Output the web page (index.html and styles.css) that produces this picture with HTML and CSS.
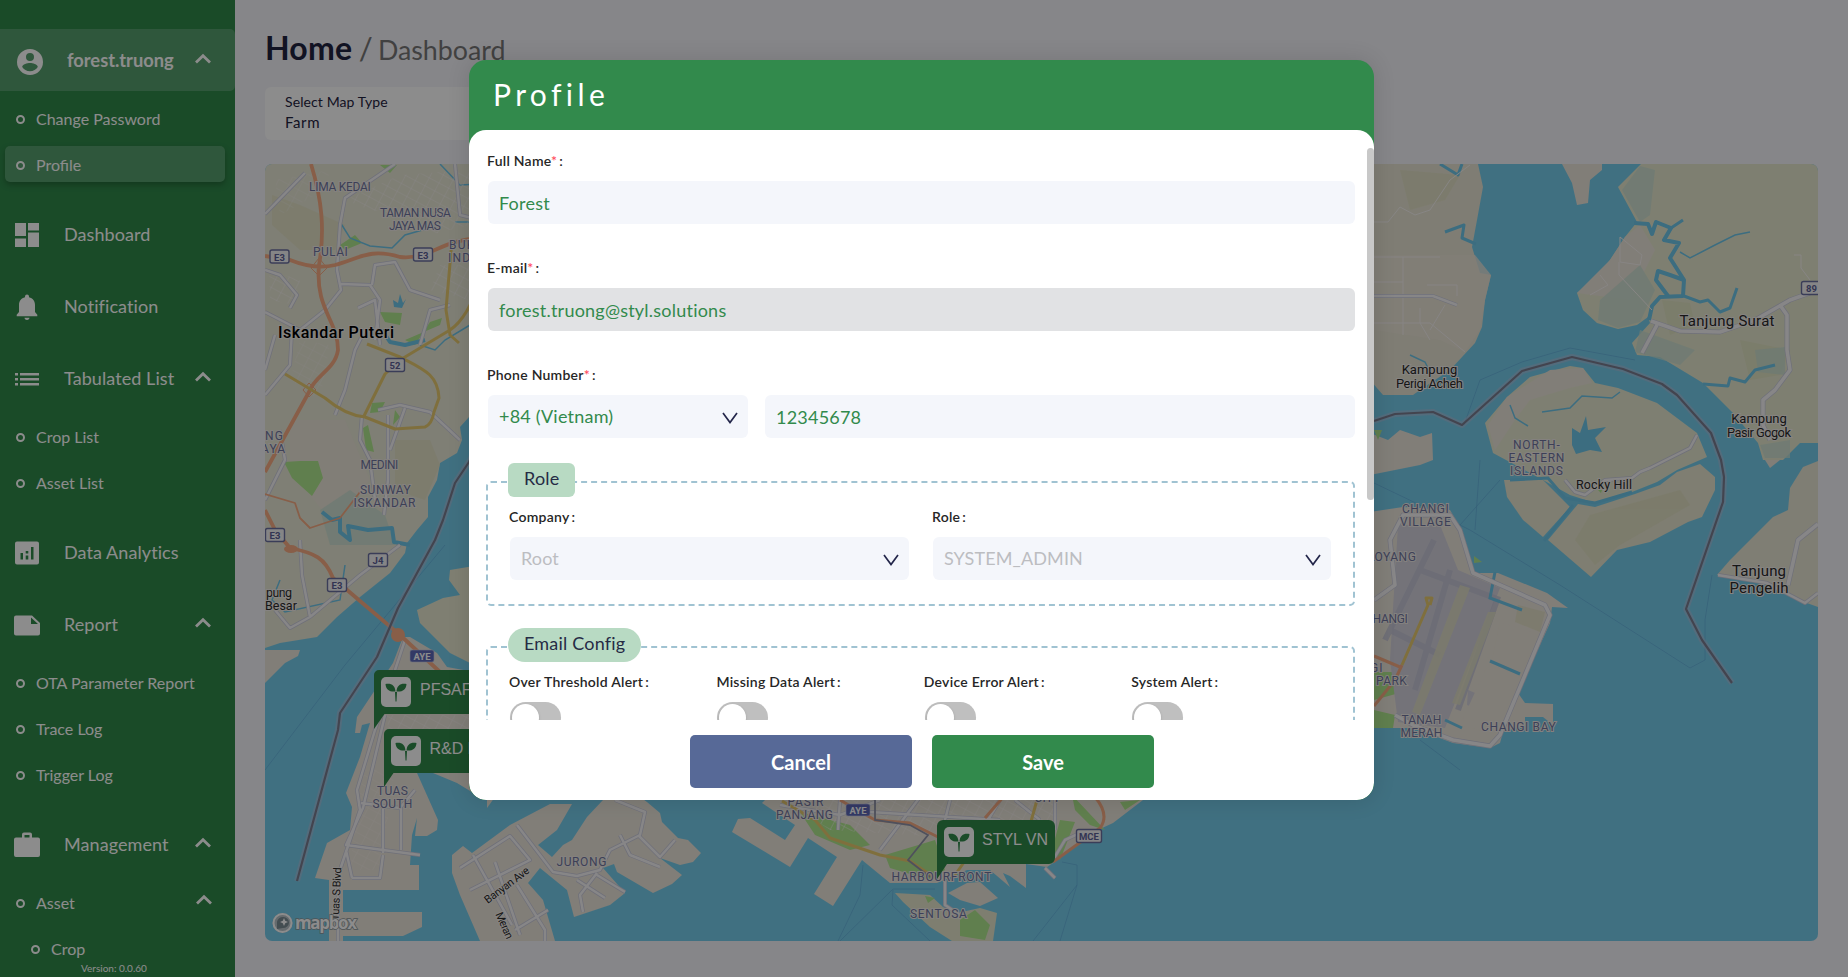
FILE: index.html
```html
<!DOCTYPE html>
<html lang="en">
<head>
<meta charset="utf-8">
<title>Profile</title>
<link rel="stylesheet" href="styles.css">
</head>
<body>
<svg width="0" height="0" class="defs">
  <symbol id="up" viewBox="0 0 18 12"><path d="M2 9.500 9 2.800l7 6.700" fill="none" stroke="#fff" stroke-width="2.800"/></symbol>
  <symbol id="down" viewBox="0 0 16 12"><path d="M1 1l7 9.500 7-9.500" fill="none" stroke="#23264a" stroke-width="1.700"/></symbol>
</svg>
<div class="app">
  <nav class="side">
    <div class="user">
      <svg class="ico" viewBox="0 0 26 26"><path fill-rule="evenodd" fill="#fff" d="M13 0a13 13 0 1 0 0 26 13 13 0 0 0 0-26zm0 4a4 4 0 1 1 0 8 4 4 0 0 1 0-8zm0 18.200c-3.300 0-6.200-1.700-7.800-4.200 0-2.600 5.200-4 7.800-4s7.800 1.400 7.800 4c-1.600 2.500-4.500 4.200-7.800 4.200z"/></svg>
      <b>forest.truong</b><svg class="chev"><use href="#up"/></svg>
    </div>
    <div class="sub">
      <a><i></i>Change Password</a>
      <a class="on"><i></i>Profile</a>
    </div>
    <div class="main"><svg class="ico" viewBox="0 0 26 26"><path fill="#fff" d="M1 1h11v13H1zM14 1h11v7.500H14zM1 16.500h11V25H1zM14 10.500h11V25H14z"/></svg><span>Dashboard</span></div>
    <div class="main"><svg class="ico" viewBox="0 0 26 26"><path fill="#fff" d="M13 26c1.600 0 2.500-1 2.500-2.200h-5c0 1.200.9 2.200 2.500 2.200zM21 18v-7c0-4-2.200-6.700-6-7.700V2.500a2 2 0 0 0-4 0v.8C7.200 4.300 5 7 5 11v7l-2.300 2.700v1.500h20.600v-1.500z"/></svg><span>Notification</span></div>
    <div class="main"><svg class="ico" viewBox="0 0 26 26"><path fill="#fff" d="M1 7h3v2.500H1zM6 7h19v2.500H6zM1 12h3v2.500H1zM6 12h19v2.500H6zM1 17h3v2.500H1zM6 17h19v2.500H6z"/></svg><span>Tabulated List</span><svg class="chev"><use href="#up"/></svg></div>
    <div class="sub">
      <a><i></i>Crop List</a>
      <a><i></i>Asset List</a>
    </div>
    <div class="main"><svg class="ico" viewBox="0 0 26 26"><path fill-rule="evenodd" fill="#fff" d="M3 1.500h20a2 2 0 0 1 2 2v19a2 2 0 0 1-2 2H3a2 2 0 0 1-2-2v-19a2 2 0 0 1 2-2zM6.500 13v6.500H9V13zM11.700 15.500v4h2.600v-4zM11.700 11v2.500h2.600V11zM17 7v12.500h2.500V7z"/></svg><span>Data Analytics</span></div>
    <div class="main"><svg class="ico" viewBox="0 0 26 26"><path fill-rule="evenodd" fill="#fff" d="M2 3.500h16l8 7.500v10.500a2 2 0 0 1-2 2H2a2 2 0 0 1-2-2v-16a2 2 0 0 1 2-2zM17 5.500V12h7z"/></svg><span>Report</span><svg class="chev"><use href="#up"/></svg></div>
    <div class="sub">
      <a><i></i>OTA Parameter Report</a>
      <a><i></i>Trace Log</a>
      <a><i></i>Trigger Log</a>
    </div>
    <div class="main"><svg class="ico" viewBox="0 0 26 26"><path fill-rule="evenodd" fill="#fff" d="M10 .5h6a2 2 0 0 1 2 2v3h6a2 2 0 0 1 2 2V23a2 2 0 0 1-2 2H2a2 2 0 0 1-2-2V7.500a2 2 0 0 1 2-2h6v-3a2 2 0 0 1 2-2zm.5 2.500v2.500h5V3z"/></svg><span>Management</span><svg class="chev"><use href="#up"/></svg></div>
    <div class="sub">
      <a><i></i>Asset<svg class="chev"><use href="#up"/></svg></a>
      <a class="deep"><i></i>Crop</a>
    </div>
    <div class="version">Version: 0.0.60</div>
  </nav>
  <main class="content">
    <h1><b>Home</b><span> / </span><em>Dashboard</em></h1>
    <div class="maptype"><label>Select Map Type</label><div>Farm</div></div>
    <svg class="map" viewBox="265 164 1553 777">
      <defs>
        <pattern id="grid" width="11" height="9" patternUnits="userSpaceOnUse" patternTransform="rotate(28)"><path d="M0 0H11M0 0V9" stroke="#f7f5f3" stroke-width=".9" fill="none"/></pattern>
        <g id="leaf"><rect width="30" height="30" rx="5" fill="#fff"/><path fill="#308a4b" d="M4.500 7c6-1 9.500 1.500 10 7.500-6 .5-9.500-1.500-10-7.500zM25.500 7c-6-1-9.500 1.500-10 7.500 6 .5 9.500-1.500 10-7.500zM14 15h2l-.5 9.500h-1z"/></g>
      </defs>
      <rect x="265" y="164" width="1553" height="777" fill="#76cdec"/>
      <!-- mainland and islands -->
      <g fill="#ece5da">
        <path fill="#e8e7d5" d="M265 164H620V400H469L469 417 460 427 462 440 457 453 440 463 437 480 428 497 428 517 417 530 407 543 405 553 390 573 360 597 337 617 317 637 280 643 265 648z"/>
        <path d="M265 650H300L298 656 285 663 265 683z"/>
        <path fill="#e7e8d0" d="M480 565 450 570 449 580 460 595 443 598 417 610 420 623 437 640 450 653 480 668z"/>
        <path d="M403 637 410 637 437 653 447 667 480 673V797L457 783 433 773 417 773 438 820 437 830 427 836 415 836 417 818 412 835 410 865H419V890H343V912H422V927L403 936H343V941H329V880L315 878 327 843 350 830 352 807 346 793 360 757 370 723 362 725 360 733 355 733 357 717 375 690 393 663z"/>
        <path d="M452 855 463 846 472 853 510 825 550 804H572L557 830 538 845 552 857 563 845 572 840 587 817 603 800 630 790 647 802 660 813 662 822 678 838 688 840 701 853 693 862 680 865 660 858 682 875 672 884 653 893 617 872 614 864 603 868 625 893 610 905 574 917 567 890 540 868 528 883 543 900 555 941H480L460 895 452 873z"/>
        <path d="M487 790H500L487 808z"/>
        <path d="M732 832 738 819 750 818 785 840 795 825 762 803 775 790H1160L1143 800 1113 823 1087 835 1053 863 1047 867 1026 864V888L1010 876 1003 873 1010 887 990 870 967 870 937 883 890 883 862 860 833 906 814 894 837 857 808 838 790 867z"/>
        <path fill="#e6e6cc" d="M895 893 930 895 943 907 957 913 980 908 997 913 993 941H952L930 927 903 902z"/>
        <path d="M948 893 967 883 980 882 998 898 980 906 960 900z"/>
        <path fill="#e7e4d3" d="M1370 164H1478L1483 187 1477 220 1472 247 1480 273 1491 275 1485 300 1482 327 1475 343 1450 370 1420 390 1413 395 1383 395 1370 380z"/>
        <path d="M1562 164 1572 183 1577 205 1588 203 1590 180 1602 170V164z"/>
        <path fill="#e6e8ce" d="M1641 164 1618 187 1637 222 1625 237 1610 260 1600 273 1577 293 1583 310 1597 323 1618 329 1637 325 1648 317 1650 323 1632 343 1637 355 1660 357 1703 383 1733 413 1758 443 1763 460H1783L1800 443H1818V164z"/>
        <path fill="#e6e8d0" d="M1530 377 1570 366 1583 368 1595 383 1618 388 1657 403 1697 433 1707 457 1677 470 1657 482 1632 492 1595 503 1570 495 1543 480 1493 453 1485 423 1507 397z"/>
        <path fill="#e7e5cf" d="M1504 480H1543L1570 507 1543 537 1523 520 1507 497z"/>
        <path fill="#e7e5cf" d="M1548 540 1578 504 1595 507 1635 494 1660 485 1677 472 1700 464 1715 477V490L1702 517 1688 522 1650 542 1617 550 1591 577z"/>
        <path d="M1370 512 1383 510 1403 507 1450 510 1460 527 1473 573 1498 573 1547 593 1568 608 1552 607 1550 623 1518 693 1525 703 1553 704V725L1543 717H1525V725L1503 732 1500 743 1490 748 1453 743 1413 728H1370z"/>
        <path fill="#e7e5d3" d="M1818 461 1803 467 1790 488 1788 510 1773 517 1737 553 1730 560 1717 575 1767 582 1790 597 1818 607z"/>
        <path d="M1370 433 1388 440 1400 430 1420 437 1432 433 1433 460 1420 465 1370 475z"/>
        <path d="M1765 460H1780L1770 468z"/>
      </g>
      <g fill="#ece5da">
        <path d="M1374 255H1475L1491 275 1485 300 1480 330 1465 352 1440 340 1374 330z" opacity=".8"/>
        <path d="M1625 237 1640 225 1655 250 1630 300 1577 293 1610 260zM1488 425 1507 397 1550 370 1583 368 1592 383 1570 388 1530 400 1515 420 1495 450z"/>
        <path d="M290 420H345L370 480 330 520 290 470z" opacity=".8"/>
      </g>
      <g fill="#dfe0be" opacity=".6">
        <path d="M272 195 300 205 345 225 335 250 300 250 272 225zM395 440 430 440 440 465 425 500 395 490z"/>
        <path d="M1662 300 1690 303 1695 325 1670 335zM1740 340 1790 350 1780 375 1750 380zM1400 170 1460 175 1445 200 1410 210z"/>
        <path d="M1575 540 1590 515 1680 490 1690 505 1620 545 1595 565z"/>
      </g>
      <g fill="#c7dfd2" opacity=".75"><path d="M1640 166 1655 170 1650 215 1640 222 1622 190zM1600 300 1640 265 1655 290 1640 322 1618 328 1598 320zM1640 330 1695 350 1680 365 1635 352zM320 510 350 490 385 515 395 545 330 545zM1755 350 1785 347 1785 375 1758 372zM1760 445 1790 440 1790 458 1765 458z"/></g>
      <!-- parks -->
      <g fill="#afe88e">
        <path d="M284 462 300 461 318 461 323 478 312 496 292 478zM340 245 355 235 362 243 345 250zM380 312 402 313 400 325 385 322zM405 340 440 325 442 318 430 322 415 345zM363 428 366 450 374 452 368 425zM372 403 385 402 380 412 370 413zM395 410 400 417 393 425zM380 165 397 165 390 173z"/>
        <path d="M800 812 850 825 870 845 850 850 815 835zM885 855 935 840 945 870 930 880 890 868zM1060 820 1075 822 1060 860 1052 850zM1072 795 1105 830 1090 825 1075 810zM960 920 975 910 990 925 985 940 960 936zM925 896 935 898 928 903zM1120 802 1140 800 1125 810z"/>
        <path d="M1374 672 1410 672 1410 690 1374 700zM1374 710 1395 715 1393 728 1374 728zM1408 527 1420 530 1412 541zM1374 430 1382 430 1378 440zM1598 490 1602 490 1601 493zM1474 556 1482 562 1474 563z"/>
      </g>
      <!-- airport apron and runways -->
      <g fill="#d3d2dd"><path d="M1398 525 1440 525 1458 570 1500 588 1445 728 1398 722 1390 660z"/><path d="M1468 690 1497 702 1490 715 1467 705z"/></g>
      <g stroke="#c3c4d6" stroke-width="6" fill="none" opacity=".8"><path d="M1434 540 1385 640M1450 570 1415 690M1497 600 1458 710M1420 570 1500 600M1390 630 1440 655"/></g>
      <g fill="#e1e0c4" opacity=".8"><path d="M1460 585 1470 588 1420 715 1412 712zM1488 612 1496 612 1460 705 1452 703zM1518 605 1545 612 1540 632 1515 622z"/></g>
      <g fill="#ece5da"><path d="M1500 622 1540 635 1522 672 1492 660zM1488 664 1520 676 1498 735 1460 725z"/></g>
      <!-- small water -->
      <g fill="none" stroke="#6ec6ea">
        <path stroke-width="4" stroke-linejoin="round" d="M1634 223 1648 224 1652 234 1656 222 1671 228 1664 240 1679 243 1670 258 1684 280 1683 296 1660 297 1652 306 1649 320M1668 296 1656 280 1658 271 1670 275 1684 280"/>
        <path stroke-width="3" stroke-linejoin="round" d="M1684 296 1700 302 1708 300 1720 312 1730 308 1737 288M1671 228 1683 220M1703 384 1728 386 1730 378 1745 382 1755 370 1775 365M1440 164 1458 175 1462 164M1476 244 1462 238 1464 225 1445 232"/>
        <path stroke-width="4" stroke-linejoin="round" d="M322 512 332 520 340 518 340 532 350 540 348 526 368 530 392 528 394 542 410 545M382 330 390 342 405 345 425 340"/>
        <path stroke-width="1.500" d="M340 222 350 238 370 246 392 248 405 235 440 225M455 222H480M420 345 435 350 445 340 470 325M440 164 460 185 480 184M280 580 272 600 285 612 340 600 345 565M1510 405 1515 418 1528 426M1542 412 1570 408 1582 396 1612 398 1620 392M1680 252 1690 258 1715 245 1735 235 1750 232M1410 355 1425 362 1430 372"/>
        <path stroke-width="3" d="M1510 480 1548 478 1565 498 1595 503 1632 492M1544 541 1573 505M1495 572 1490 598 1522 610M1490 661 1520 674M1445 720 1462 728"/>
      </g>
      <path fill="#6ec6ea" d="M1572 428 1580 433 1586 416 1588 430 1606 427 1595 438 1602 452 1590 450 1576 454 1572 445zM393 300 398 303 400 294 403 303 406 299 402 308 394 307z"/>
      <g fill="none" stroke="#5faad9" stroke-width="1" opacity=".6">
        <path d="M265 770 345 665 445 545M838 941 860 895 863 865M840 941 893 889 935 889M930 941 892 905 893 890M1033 941 1077 885 1077 865 1062 862M1060 941 1077 885M1374 483 1420 505 1470 530 1560 585 1690 668 1705 660 1705 620 1712 575M1464 425 1480 380 1522 362 1570 348 1635 360M1480 460 1475 530M1420 740 1460 770M1500 480 1460 525"/>
      </g>
      <!-- street texture -->
      <g fill="url(#grid)">
        <path d="M345 200 400 175 469 170V225L430 235 410 215 370 210zM440 265H469V300L430 290zM269 270 300 280 295 305 270 300zM385 715 469 715V760L400 770zM780 797 1060 797 1050 830 990 840 830 830z"/>
        <path opacity=".6" d="M275 180 330 170 325 190 280 215zM300 340 330 345 320 400 290 380zM360 770 395 770 380 870 350 870z"/>
      </g>
      <!-- country lanes -->
      <path fill="none" stroke="#f6f2f0" stroke-width="1" d="M1374 257H1440M1403 257V335M1374 282H1403M1374 323H1430L1465 352M1420 308V323L1430 340M1427 285H1457V296M1445 305 1430 330M1374 222H1388L1400 207 1415 215 1430 210 1450 180 1470 165M1620 237 1642 255 1640 265 1620 262zM1619 262V275L1652 310M1600 275 1608 285 1590 295M1794 255 1801 255V268L1810 280"/>
      <!-- minor roads -->
      <g fill="none" stroke="#c9cbdc" stroke-width="4" stroke-linejoin="round">
        <path d="M265 214 305 173M395 164 345 198 340 225 337 270 341 290 325 310 300 330 265 312M265 270 280 275 297 295 290 308M341 284 370 285 380 300 375 340M358 308 375 300 380 345M372 285 375 265 395 262 410 290 440 300M335 415 345 390 355 350 365 330M362 415 360 440 370 460 375 500M378 410 400 405 430 412 460 440M388 415 388 480 384 515M405 408 390 450M420 345 430 310 450 305M455 164 460 215 480 220M265 395 290 365 292 330M265 370 275 335M300 540 302 575 310 617M265 500 285 460 280 430M310 617 290 628 275 610M310 617 360 575 400 545"/>
        <path d="M405 640 375 730 357 790 360 810 340 870M385 715 363 808 346 845 420 855M383 808V853M401 808V850M352 878H380L383 855M346 850 352 878M338 870V941M361 803 400 808 415 790"/>
        <path d="M517 825 553 872 577 876 600 870 610 850 640 835 645 812 615 800M460 868 510 836 530 860 470 890M473 855 512 925M495 862 520 935M515 930 548 910M517 885 545 930 545 941M620 835 630 855 660 867M638 835 660 857 675 840M597 875 625 892M577 880 605 898M597 873 580 895 583 912"/>
        <path d="M1374 296H1433L1457 305"/>
        <path stroke-width="5" d="M1374 600 1395 585 1390 540 1403 515 1450 515 1460 530 1473 573 1545 605 1550 615 1500 735 1490 746 1453 740 1413 725 1395 715M1818 524 1798 540 1788 585"/>
        <path stroke-width="5" d="M1651 321 1680 331 1720 332 1755 320 1790 300 1818 290M1780 305 1787 315 1787 350 1790 370 1775 390 1763 400 1763 425 1770 440M1657 325 1642 353"/>
        <path d="M1718 575 1767 583 1805 603 1818 593M1565 480 1575 492 1585 495 1605 480 1632 478 1640 472 1650 468 1690 448 1697 435"/>
        <path d="M780 805 840 815 880 800M880 850 920 797M870 812 1000 820M1000 800 970 850M1015 800 1040 820M950 800 940 840M945 880V905L960 915M1053 860 1065 840 1080 833M1045 868 1055 878M1055 797V830M840 800 838 830"/>
      </g>
      <g fill="none" stroke="#f6f4f6" stroke-width="2.500" stroke-linejoin="round">
        <path d="M265 214 305 173M395 164 345 198 340 225 337 270 341 290 325 310 300 330 265 312M265 270 280 275 297 295 290 308M341 284 370 285 380 300 375 340M358 308 375 300 380 345M372 285 375 265 395 262 410 290 440 300M335 415 345 390 355 350 365 330M362 415 360 440 370 460 375 500M378 410 400 405 430 412 460 440M388 415 388 480 384 515M405 408 390 450M420 345 430 310 450 305M455 164 460 215 480 220M265 395 290 365 292 330M265 370 275 335M300 540 302 575 310 617M265 500 285 460 280 430M310 617 290 628 275 610M310 617 360 575 400 545"/>
        <path d="M405 640 375 730 357 790 360 810 340 870M385 715 363 808 346 845 420 855M383 808V853M401 808V850M352 878H380L383 855M346 850 352 878M338 870V941M361 803 400 808 415 790"/>
        <path d="M517 825 553 872 577 876 600 870 610 850 640 835 645 812 615 800M460 868 510 836 530 860 470 890M473 855 512 925M495 862 520 935M515 930 548 910M517 885 545 930 545 941M620 835 630 855 660 867M638 835 660 857 675 840M597 875 625 892M577 880 605 898M597 873 580 895 583 912"/>
        <path d="M1374 296H1433L1457 305"/>
        <path stroke-width="3.600" d="M1374 600 1395 585 1390 540 1403 515 1450 515 1460 530 1473 573 1545 605 1550 615 1500 735 1490 746 1453 740 1413 725 1395 715M1818 524 1798 540 1788 585"/>
        <path stroke-width="3.600" d="M1651 321 1680 331 1720 332 1755 320 1790 300 1818 290M1780 305 1787 315 1787 350 1790 370 1775 390 1763 400 1763 425 1770 440M1657 325 1642 353"/>
        <path d="M1718 575 1767 583 1805 603 1818 593M1565 480 1575 492 1585 495 1605 480 1632 478 1640 472 1650 468 1690 448 1697 435"/>
        <path d="M780 805 840 815 880 800M880 850 920 797M870 812 1000 820M1000 800 970 850M1015 800 1040 820M950 800 940 840M945 880V905L960 915M1053 860 1065 840 1080 833M1045 868 1055 878M1055 797V830M840 800 838 830"/>
      </g>
      <!-- highways -->
      <g fill="none" stroke="#f7ac83" stroke-width="3.800" stroke-linejoin="round">
        <path d="M311 164C322 200 325 230 319 265 315 310 338 320 338 350 335 370 315 375 309 392L265 472M265 256 290 260Q315 270 335 265C360 258 370 248 400 257 430 260 440 240 480 238"/>
        <path d="M265 510 275 530 290 548C315 553 325 558 333 578L400 635 440 672"/>
        <path stroke-width="1.800" d="M265 494 295 503 300 518 310 528 340 518 360 492"/>
        <path stroke-width="3" d="M840 800 875 820 910 823 940 838M985 818 1005 795M1095 797Q1110 815 1100 828L1053 862M1374 656 1400 667M1374 706 1395 680 1402 665"/>
      </g>
      <g fill="#f7ac83"><ellipse cx="291" cy="549" rx="7" ry="4"/><circle cx="398" cy="635" r="7"/></g>
      <path d="M311 268 319 258 327 268 319 276zM303 390 309 383 316 390 309 397z" fill="none" stroke="#f7ac83"/>
      <g fill="none" stroke="#e8cb70" stroke-width="3" stroke-linejoin="round">
        <path d="M285 374 325 398Q345 415 365 417L395 429 425 427Q432 424 434 412L439 398C438 375 425 370 400 357L367 344M364 416 385 374 400 360 450 330Q468 318 480 280M452 240 446 310 450 335 459 343"/>
        <path d="M782 801 815 820 830 838 880 855 910 861 935 878M955 875 967 858M1037 800 1030 825"/>
        <path d="M1402 665 1428 605 1426 598 1432 598 1430 605"/>
      </g>
      <path d="M875 800V820L910 825 928 835 908 860 930 877" fill="none" stroke="#9093a8" stroke-width="1.800"/>
      <!-- territorial border -->
      <g fill="none" stroke-linejoin="round">
        <path stroke="#c2bcd6" stroke-width="6" opacity=".45" d="M480 440 469 462 455 483 443 520 435 540 398 608 377 657 340 713 338 730 297 881M1374 421 1395 414 1433 412 1462 425 1522 371 1572 357 1623 369 1662 384 1677 395 1711 433 1721 460 1724 477 1723 502 1686 609 1702 640 1732 683"/>
        <path stroke="#7a7d90" stroke-width="2.200" d="M480 440 469 462 455 483 443 520 435 540 398 608 377 657 340 713 338 730 297 881M1374 421 1395 414 1433 412 1462 425 1522 371 1572 357 1623 369 1662 384 1677 395 1711 433 1721 460 1724 477 1723 502 1686 609 1702 640 1732 683"/>
      </g>
      <!-- area labels -->
      <g class="area">
        <text x="340.500" y="191" textLength="63">LIMA KEDAI</text>
        <text x="416" y="217" textLength="72">TAMAN NUSA</text><text x="415.500" y="230" textLength="53">JAYA MAS</text>
        <text x="331" y="256" textLength="36">PULAI</text>
        <text x="449" y="249" class="s">BUKIT</text><text x="448" y="262" class="s">INDAH</text>
        <text x="265" y="440" class="s">NG</text><text x="261" y="453" class="s">AYA</text>
        <text x="380" y="469" textLength="39">MEDINI</text>
        <text x="386" y="494" textLength="52">SUNWAY</text><text x="385" y="507" textLength="63">ISKANDAR</text>
        <text x="393" y="795" textLength="32">TUAS</text><text x="393" y="808" textLength="41">SOUTH</text>
        <text x="582" y="866" textLength="51">JURONG</text>
        <text x="806" y="806" textLength="37">PASIR</text><text x="805" y="819" textLength="58">PANJANG</text>
        <text x="1048" y="802" textLength="27">CITY</text>
        <text x="942" y="881" textLength="101">HARBOURFRONT</text><text x="939" y="918" textLength="58">SENTOSA</text>
        <text x="1537" y="449" textLength="48">NORTH-</text><text x="1537" y="462" textLength="57">EASTERN</text><text x="1537" y="475" textLength="54">ISLANDS</text>
        <text x="1426" y="513" textLength="48">CHANGI</text><text x="1426" y="526" textLength="52">VILLAGE</text>
        <text x="1368" y="561" class="s" textLength="49">LOYANG</text><text x="1365" y="623" class="s" textLength="44">CHANGI</text>
        <text x="1370" y="672" class="s">GI</text><text x="1376" y="685" class="s" textLength="32">PARK</text>
        <text x="1422" y="724" textLength="41">TANAH</text><text x="1422" y="737" textLength="43">MERAH</text>
        <text x="1519" y="731" textLength="76">CHANGI BAY</text>
      </g>
      <!-- town labels -->
      <g class="town">
        <text x="336" y="338" class="big" textLength="116">Iskandar Puteri</text>
        <text x="266" y="597" class="m s" textLength="26">pung</text><text x="265" y="610" class="m s">Besar</text>
        <text x="1429.500" y="374">Kampung</text><text x="1429.500" y="388" textLength="67">Perigi Acheh</text>
        <text x="1727" y="326" class="med" textLength="95">Tanjung Surat</text>
        <text x="1759" y="423">Kampung</text><text x="1759" y="437" textLength="64">Pasir Gogok</text>
        <text x="1604" y="489" textLength="56" class="m">Rocky Hill</text>
        <text x="1759" y="576" class="med" textLength="54">Tanjung</text><text x="1759" y="593" class="med" textLength="59">Pengelih</text>
        <text transform="translate(509 888) rotate(-37)" class="st" textLength="53">Banyan Ave</text>
        <text transform="translate(501 927) rotate(66)" class="st" textLength="28">Meran</text>
        <text transform="translate(340 894) rotate(-87)" class="st" textLength="53">Tuas S Blvd</text>
      </g>
      <!-- road shields -->
      <g class="shield">
        <rect x="270" y="250" width="19" height="13" rx="2"/><text x="279.500" y="260.500">E3</text>
        <rect x="413.500" y="248" width="19" height="13" rx="2"/><text x="423" y="258.500">E3</text>
        <rect x="385.500" y="358.500" width="19" height="13" rx="2"/><text x="395" y="369">52</text>
        <rect x="265.500" y="528.500" width="19" height="13" rx="2"/><text x="275" y="539">E3</text>
        <rect x="368.500" y="553.500" width="19" height="13" rx="2"/><text x="378" y="564">J4</text>
        <rect x="327.500" y="578.500" width="19" height="13" rx="2"/><text x="337" y="589">E3</text>
        <rect x="1801.500" y="281.500" width="19" height="13" rx="2"/><text x="1811.500" y="292">89</text>
        <rect x="1076.500" y="829.500" width="25" height="13" rx="2"/><text x="1089" y="840">MCE</text>
      </g>
      <g class="shield blue">
        <rect x="410" y="650" width="24" height="12" rx="2"/><text x="422" y="660">AYE</text>
        <rect x="846" y="804" width="24" height="12" rx="2"/><text x="858" y="814">AYE</text>
      </g>
      <!-- farm pins -->
      <g class="pin">
        <path d="M379 670H520V714H384.500L374 729V675a5 5 0 0 1 5-5z"/><use href="#leaf" x="381" y="677"/><text x="420" y="695">PFSAFARM</text>
        <path d="M389 729H530V773H393.500L384 787V734a5 5 0 0 1 5-5z"/><use href="#leaf" x="391" y="736"/><text x="429.500" y="754">R&amp;D Farm</text>
        <path d="M943 820H1049a6 6 0 0 1 6 6V858a6 6 0 0 1-6 6H947L937 879V826a6 6 0 0 1 6-6z"/><use href="#leaf" x="944" y="827"/><text x="982" y="845">STYL VN</text>
      </g>
      <g class="mapbox">
        <circle cx="282.500" cy="923" r="10" fill="#b9c4c9"/><circle cx="282.500" cy="923" r="9" fill="none" stroke="#fff" stroke-width="2"/>
        <path d="M277 929V922a6 5.500 0 1 1 6 6z" fill="#7b8c94"/><path d="M284 918l1.200 2.800 2.800 1.200-2.800 1.200-1.200 2.800-1.200-2.800-2.800-1.200 2.800-1.200z" fill="#fff"/>
        <text x="295" y="929" textLength="62">mapbox</text>
      </g>
    </svg>
  </main>
</div>
<div class="mask"></div>
<div class="modal">
  <header>Profile</header>
  <div class="sheet">
    <div class="scroll">
      <div class="field"><label>Full Name<sup>*</sup><s>:</s></label><div class="input">Forest</div></div>
      <div class="field"><label>E-mail<sup>*</sup><s>:</s></label><div class="input gray">forest.truong@styl.solutions</div></div>
      <div class="field phone"><label>Phone Number<sup>*</sup><s>:</s></label>
        <div class="row"><div class="input code">+84 (Vietnam)<svg><use href="#down"/></svg></div><div class="input">12345678</div></div>
      </div>
      <section class="group role">
        <h2>Role</h2>
        <div class="cols two">
          <div><label>Company<s>:</s></label><div class="input off">Root<svg><use href="#down"/></svg></div></div>
          <div><label>Role<s>:</s></label><div class="input off">SYSTEM_ADMIN<svg><use href="#down"/></svg></div></div>
        </div>
      </section>
      <section class="group email">
        <h2>Email Config</h2>
        <div class="cols four">
          <div><label>Over Threshold Alert<s>:</s></label><div class="switch"></div></div>
          <div><label>Missing Data Alert<s>:</s></label><div class="switch"></div></div>
          <div><label>Device Error Alert<s>:</s></label><div class="switch"></div></div>
          <div><label>System Alert<s>:</s></label><div class="switch"></div></div>
        </div>
      </section>
      <div class="thumb"></div>
    </div>
    <footer><button class="cancel">Cancel</button><button>Save</button></footer>
  </div>
</div>
</body>
</html>
```
FILE: styles.css
```css
* { box-sizing: border-box; }
body { margin: 0; width: 1848px; height: 977px; overflow: hidden; position: relative; font-family: Lato, "Liberation Sans", sans-serif; background: #f5f4f9; }
.defs { position: absolute; }
.app { display: flex; height: 977px; }

/* sidebar */
.side { width: 235px; height: 977px; background: #30894a; color: #fff; padding-top: 29px; position: relative; overflow: hidden; flex: none; }
.user { display: flex; align-items: center; height: 62px; padding: 4px 23px 0 17px; margin-bottom: 6px; background: #579e6d; border-radius: 0 5px 5px 0; font-size: 18.300px; }
.user b { margin-left: 24px; flex: 1; position: relative; top: -2px; }
.user .chev { margin-top: -7px; }
.ico { width: 26px; height: 26px; flex: none; }
.chev { width: 18px; height: 12px; margin-left: auto; margin-top: -5px; flex: none; }
.main { display: flex; align-items: center; height: 72px; padding: 0 23px 0 14px; font-size: 18px; letter-spacing: .08px; }
.main span { margin-left: 24px; position: relative; top: -1px; }
.sub { padding: 3px 0 7px; }
.sub a { display: flex; align-items: center; height: 36px; margin: 0 10px 10px 5px; padding: 0 12px 0 11px; font-size: 16px; border-radius: 5px; }
.sub a.deep { padding-left: 26px; }
.sub a.on { background: #579e6d; box-shadow: 0 3px 6px rgba(0,0,0,.25); }
.sub i { width: 9px; height: 9px; border: 2px solid #fff; border-radius: 50%; margin-right: 11px; margin-top: 2px; }
.version { position: absolute; left: 81px; top: 961px; font-size: 10px; line-height: 14px; }

/* page */
.content { padding: 0 30px; }
h1 { margin: 0; height: 87px; padding-top: 26px; font-weight: 400; font-size: 32px; line-height: 44px; color: #1f2340; white-space: pre; }
h1 b { letter-spacing: .2px; }
h1 em { font-style: normal; font-size: 26.800px; color: #777; }
h1 span { color: #777; font-size: 31px; letter-spacing: -1.400px; }
.maptype { width: 300px; height: 53px; background: #fff; border-radius: 6px; padding: 5px 20px; font-size: 14px; line-height: 19px; color: #1f2340; letter-spacing: .1px; margin-bottom: 24px; }
.maptype label { color: #1f2340; }
.maptype div { font-size: 15px; line-height: 21px; letter-spacing: .6px; }
.map { display: block; width: 1553px; height: 777px; border-radius: 7px; }
.map text { font-family: Roboto, sans-serif; }
.area text { font-size: 12px; fill: #70769f; letter-spacing: 1.2px; text-anchor: middle; stroke: #f0ece8; stroke-width: 2px; paint-order: stroke; font-weight: 400; }
.map .s { text-anchor: start; }
.town text { font-size: 13px; fill: #2b2b2b; text-anchor: middle; stroke: #f3efec; stroke-width: 2px; paint-order: stroke; font-weight: 400; }
.town .big { font-size: 16px; fill: #000; font-weight: 500; }
.town .med { font-size: 15px; }
.town .m { font-size: 12.5px; }
.town .st { font-size: 11px; }
.shield rect { fill: #f3f2f4; stroke: #6b70a0; stroke-width: 1.4; }
.shield text { font-size: 9.5px; font-weight: 700; text-anchor: middle; fill: #5b6096; }
.blue rect { fill: #5d69b8; stroke: #c8cbe6; stroke-width: .6; }
.shield.blue text { fill: #fff; }
.pin path { fill: #30894a; }
.map .pin text { fill: #fff; font-family: "Liberation Sans", sans-serif; font-size: 16px; }
.map .mapbox text { font-family: "Open Sans", sans-serif; font-weight: 700; font-size: 17px; fill: #fff; stroke: #8b979b; stroke-width: 1.5px; paint-order: stroke; }
.mask { position: absolute; inset: 0; background: rgba(0,0,0,.45); }

/* dialog */
.modal { position: absolute; left: 469px; top: 60px; width: 905px; height: 740px; background: #328a4c; border-radius: 17px; overflow: hidden; box-shadow: 0 0 22px rgba(0,0,0,.13); }
.modal header { height: 70px; line-height: 69px; padding-left: 24px; font-size: 30px; letter-spacing: 4.400px; color: #fff; }
.sheet { height: 670px; background: #fff; border-radius: 17px; overflow: hidden; }
.scroll { position: relative; height: 590px; overflow: hidden; padding: 21px 19px 0 19px; }
.field { height: 107px; }
.phone { height: 110px; }
label { display: block; font-size: 14px; line-height: 20px; color: #262626; }
.modal label { letter-spacing: .25px; white-space: nowrap; margin-left: -1px; height: 20px; margin-bottom: 10px; font-weight: 600; }
label sup { color: #ff4d5e; font-size: 14px; line-height: 0; vertical-align: baseline; }
label s { text-decoration: none; margin-left: 2px; }
.input { height: 43px; border-radius: 6px; background: #f4f6fb; color: #328a4c; font-size: 18px; line-height: 44px; padding: 0 10px 0 11px; display: flex; flex: 1; letter-spacing: .22px; }
.input svg { width: 16px; height: 12px; margin: 17px 0 0 auto; flex: none; }
.gray { background: #e1e2e4; }
.off { color: #bcbdc1; letter-spacing: .12px; }
.row { display: flex; gap: 17px; }
.code { flex: 0 0 260px; line-height: 43px; }
.group { position: relative; margin: 0 0 0 -2px; border: 2px dashed #a0c3d2; border-radius: 5px; padding: 24px 22px 0; }
.role { height: 125px; margin-top: 6px; }
.role .off { line-height: 43px; }
.email { height: 200px; margin-top: 40px; }
h2 { position: absolute; left: 20px; top: -20px; margin: 0; height: 34px; padding: 0 16px; font-size: 18px; line-height: 31px; letter-spacing: .2px; font-weight: 400; color: #262b45; background: #b8dac3; border-radius: 6px; }
.email h2 { border-radius: 17px; }
.cols { display: grid; }
.two { grid-template-columns: 399px 398px; gap: 24px; }
.four { grid-template-columns: repeat(4, 207.4px); }
.switch { width: 51px; height: 31px; border-radius: 16px; background: #bfbfbf; padding: 2px; }
.switch::before { content: ""; display: block; width: 27px; height: 27px; border-radius: 50%; background: #fff; box-shadow: 0 1px 3px rgba(0,0,0,.15); }
.thumb { position: absolute; right: 0; top: 18px; width: 7px; height: 352px; border-radius: 4px; background: #c8c8c8; }
footer { display: flex; justify-content: center; gap: 20px; padding-top: 15px; margin-right: -1px; }
button { width: 222px; height: 53px; border: 0; border-radius: 5px; background: #328a4c; color: #fff; font: 700 20px/54px Lato, sans-serif; padding: 0; }
.cancel { background: #576997; }
```
